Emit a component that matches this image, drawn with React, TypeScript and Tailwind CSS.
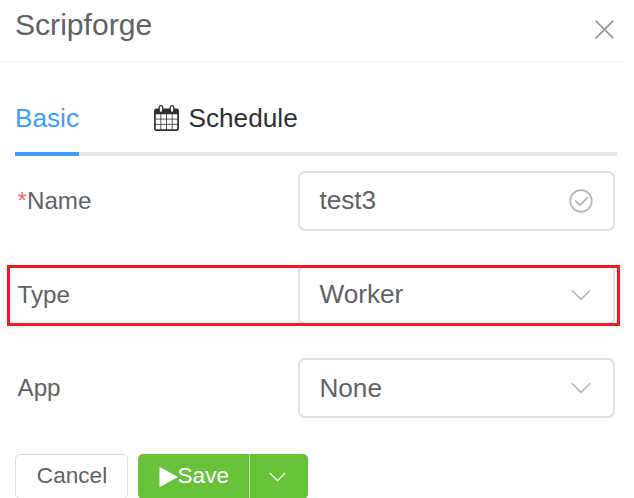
import type { ReactNode } from "react";

function ChevronDown({ className }: { className: string }) {
  return (
    <svg viewBox="0 0 20 12" fill="none" stroke="currentColor" strokeWidth="1.6" className={className}>
      <path d="M0.8 1.2 L10 10.4 L19.2 1.2" />
    </svg>
  );
}

function CloseIcon() {
  return (
    <svg viewBox="0 0 19 19" fill="none" stroke="currentColor" strokeWidth="1.5" className="size-[19px] text-[#909399]">
      <path d="M0.6 0.6 L18.4 18.4 M18.4 0.6 L0.6 18.4" />
    </svg>
  );
}

function CircleCheck() {
  return (
    <svg viewBox="0 0 24 24" fill="none" stroke="currentColor" strokeWidth="1.7" className="size-6 text-[#b4b6bc]">
      <circle cx="12" cy="12" r="10.8" />
      <path d="M6.2 11.6 L11 16.2 L18.8 8.2" />
    </svg>
  );
}

function CalendarIcon() {
  return (
    <svg viewBox="0 0 25 26" fill="none" className="h-[26px] w-[25px] text-[#303133]">
      <rect x="0.9" y="4.4" width="23.2" height="20.8" rx="1.5" stroke="currentColor" strokeWidth="1.7" />
      <path d="M0.9 9.2 V5.6 Q0.9 4 2.4 4 H22.6 Q24.1 4 24.1 5.6 V9.2 Z" fill="currentColor" />
      <path d="M1 14.1 H24 M1 19.4 H24 M6.8 9 V25 M12.5 9 V25 M18.2 9 V25" stroke="currentColor" strokeWidth="0.8" />
      <rect x="5.2" y="0.7" width="3.5" height="6.8" rx="1.7" fill="#fff" stroke="currentColor" strokeWidth="1.3" />
      <rect x="16.3" y="0.7" width="3.5" height="6.8" rx="1.7" fill="#fff" stroke="currentColor" strokeWidth="1.3" />
    </svg>
  );
}

function Field({ label, value, icon, required }: { label: string; value: string; icon: ReactNode; required?: boolean }) {
  return (
    <div className="flex h-[60px] items-center">
      <div className="w-[281.4px] shrink-0 pl-[0.5px] text-[24.2px] leading-[60px] text-[#606266]">
        {required && <span className="text-[#f56c6c]">*</span>}
        {label}
      </div>
      <div className="flex h-[60px] w-[317px] items-center justify-between rounded-[7px] border-2 border-[#dfe2e8] pr-5 pl-[19px]">
        <span className={`text-[26.2px] leading-8 text-[#606266] ${required ? "pb-0.5" : "pb-px"}`}>{value}</span>
        <span className="flex w-6 justify-center">{icon}</span>
      </div>
    </div>
  );
}

export default function App() {
  return (
    <div className="h-[498px] w-[634px] overflow-hidden bg-white font-['Liberation_Sans',Arial,sans-serif]">
      <header className="flex h-[62px] w-[624px] items-start justify-between border-b border-[#f2f6fc] pr-2.5 pl-[15px]">
        <h1 className="pt-[7px] text-[30.1px] leading-9 text-[#606266]">Scripforge</h1>
        <button aria-label="Close" className="mt-5">
          <CloseIcon />
        </button>
      </header>

      <nav className="mt-[30px] ml-[15px] flex h-16 w-[602px] items-start border-b-4 border-[#e4e7ed] text-[26.2px] leading-[52px]">
        <button className="h-16 w-16 shrink-0 border-b-4 border-[#409eff] pb-2 text-left whitespace-nowrap text-[#409eff]">
          Basic
        </button>
        <button className="ml-[75px] flex items-center text-[#303133]">
          <CalendarIcon />
          <span className="ml-[9.5px]">Schedule</span>
        </button>
      </nav>

      <form className="relative mt-[15px] ml-[17px] flex flex-col gap-[33.5px]">
        <Field label="Name" value="test3" required icon={<CircleCheck />} />
        <Field label="Type" value="Worker" icon={<ChevronDown className="h-3 w-5 text-[#b4b6bc]" />} />
        <Field label="App" value="None" icon={<ChevronDown className="h-3 w-5 text-[#b4b6bc]" />} />
        {/* Highlight outline over the Type row */}
        <div className="pointer-events-none absolute top-[94px] -left-[9.6px] h-[61px] w-[613px] border-3 border-[#ed1c24]" />
      </form>

      <footer className="mt-9 ml-[15px] flex h-[45px] text-[22.6px]">
        <button className="w-[113px] rounded-[5px] border-[1.5px] border-[#dcdfe6] pb-0.5 pl-px text-[#606266]">Cancel</button>
        <div className="ml-2.5 flex overflow-hidden rounded-[5px] bg-[#67c23a] text-white">
          <button className="flex w-[111.5px] items-center border-r border-white/60 pl-[21px]">
            <svg viewBox="0 0 19 22" fill="currentColor" className="h-[22px] w-[19px] shrink-0">
              <path d="M0.5 0.8 V21.2 L19 11 Z" />
            </svg>
            <span className="-ml-[0.5px] pb-0.5">Save</span>
          </button>
          <button aria-label="More save options" className="flex w-[58.5px] items-center justify-center pr-0.5">
            <ChevronDown className="h-2.5 w-[17px]" />
          </button>
        </div>
      </footer>
    </div>
  );
}
